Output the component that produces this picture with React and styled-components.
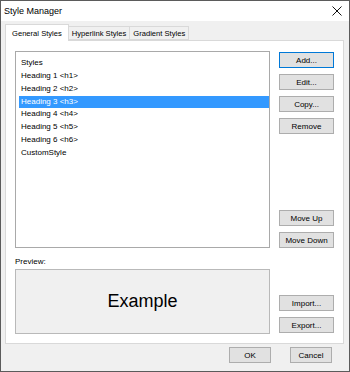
import React from 'react'
import styled, { createGlobalStyle } from 'styled-components'

const GlobalStyle = createGlobalStyle`
  html, body {
    margin: 0;
    padding: 0;
    background: #f0f0f0;
  }
  * {
    box-sizing: border-box;
  }
`

const styles = [
  'Heading 1 <h1>',
  'Heading 2 <h2>',
  'Heading 3 <h3>',
  'Heading 4 <h4>',
  'Heading 5 <h5>',
  'Heading 6 <h6>',
  'CustomStyle',
]

export default function App() {
  return (
    <Window>
      <GlobalStyle />
      <TitleBar>
        <Title>Style Manager</Title>
        <Close>
          <svg width="10" height="10" viewBox="0 0 10 10">
            <path d="M0.5 0.5 L9.5 9.5 M9.5 0.5 L0.5 9.5" stroke="#111" strokeWidth="1" />
          </svg>
        </Close>
      </TitleBar>

      <Body>
        <Tabs>
          <Tab active>General Styles</Tab>
          <Tab>Hyperlink Styles</Tab>
          <Tab>Gradient Styles</Tab>
        </Tabs>

        <Panel>
          <LeftColumn>
            <ListBox>
              <ListHeader>Styles</ListHeader>
              {styles.map((s, i) => (
                <ListItem key={s} selected={i === 2}>{s}</ListItem>
              ))}
            </ListBox>
            <Label>Preview:</Label>
            <PreviewBox>Example</PreviewBox>
          </LeftColumn>

          <RightColumn>
            <ButtonGroup>
              <Button focused>Add...</Button>
              <Button>Edit...</Button>
              <Button>Copy...</Button>
              <Button>Remove</Button>
            </ButtonGroup>
            <ButtonGroup top={76}>
              <Button>Move Up</Button>
              <Button>Move Down</Button>
            </ButtonGroup>
            <ButtonGroup top={47}>
              <Button>Import...</Button>
              <Button>Export...</Button>
            </ButtonGroup>
          </RightColumn>
        </Panel>

        <Footer>
          <Button wide>OK</Button>
          <Button wide>Cancel</Button>
        </Footer>
      </Body>
    </Window>
  )
}

const Window = styled.div`
  width: 350px;
  height: 372px;
  border: 1px solid #5b5b5b;
  background: #f0f0f0;
  display: flex;
  flex-direction: column;
  font-family: "Liberation Sans", Arial, sans-serif;
  font-size: 8px;
  color: #000;
  overflow: hidden;
`

const TitleBar = styled.div`
  height: 20px;
  background: #fff;
  display: flex;
  align-items: center;
  justify-content: space-between;
  padding: 0 6px 0 3px;
`

const Title = styled.span`
  font-size: 9px;
`

const Close = styled.span`
  display: flex;
  align-items: center;
  margin-right: 1px;
`

const Body = styled.div`
  flex: 1;
  display: flex;
  flex-direction: column;
  padding: 2px 5px 0 4px;
`

const Tabs = styled.div`
  display: flex;
  align-items: flex-end;
  height: 17px;
  position: relative;
  z-index: 1;
`

const Tab = styled.div`
  height: ${p => (p.active ? '17px' : '14px')};
  padding: 0 ${p => (p.active ? '6px' : '3px')};
  display: flex;
  align-items: center;
  font-size: 7.6px;
  border: 1px solid #d9d9d9;
  border-bottom: ${p => (p.active ? 'none' : '1px solid #d9d9d9')};
  border-left: ${p => (p.active ? '1px solid #d9d9d9' : 'none')};
  background: ${p => (p.active ? '#fff' : '#f0f0f0')};
  margin-bottom: ${p => (p.active ? '-1px' : '0')};
  white-space: nowrap;
`

const Panel = styled.div`
  height: 304px;
  background: #fff;
  border: 1px solid #d9d9d9;
  display: grid;
  grid-template-columns: 255px 55px;
  column-gap: 9px;
  padding: 10px 0 0 9px;
`

const LeftColumn = styled.div`
  display: flex;
  flex-direction: column;
`

const ListBox = styled.div`
  height: 197px;
  border: 1px solid #a9a9a9;
  background: #fff;
  padding: 3px 0 0 3px;
`

const ListHeader = styled.div`
  height: 15px;
  line-height: 15px;
  padding-left: 2px;
`

const ListItem = styled.div`
  height: 12.8px;
  line-height: 12.8px;
  padding-left: 2px;
  background: ${p => (p.selected ? '#3399ff' : 'transparent')};
  color: ${p => (p.selected ? '#fff' : '#000')};
`

const Label = styled.div`
  margin: 6px 0 0 0;
  height: 15px;
  line-height: 15px;
`

const PreviewBox = styled.div`
  height: 65px;
  border: 1px solid #b9b9b9;
  background: #f0f0f0;
  display: flex;
  align-items: center;
  justify-content: center;
  font-size: 18px;
`

const RightColumn = styled.div`
  display: flex;
  flex-direction: column;
  padding-top: 1px;
`

const ButtonGroup = styled.div`
  display: flex;
  flex-direction: column;
  gap: 6px;
  margin-top: ${p => p.top || 0}px;
`

const Button = styled.div`
  width: ${p => (p.wide ? '42px' : '55px')};
  height: 16px;
  border: 1px solid ${p => (p.focused ? '#0078d7' : '#adadad')};
  background: #e1e1e1;
  display: flex;
  align-items: center;
  justify-content: center;
  white-space: nowrap;
`

const Footer = styled.div`
  display: flex;
  justify-content: flex-end;
  gap: 19px;
  padding: 3px 12px 0 0;
`
